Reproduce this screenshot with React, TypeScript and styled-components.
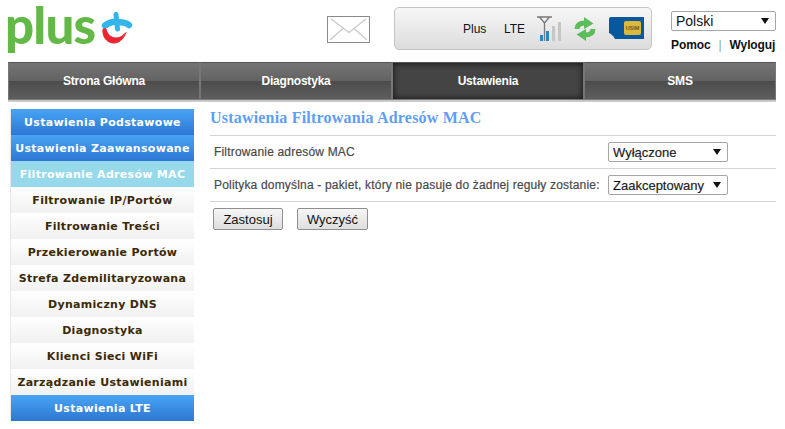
import React from "react";
import styled, { createGlobalStyle } from "styled-components";

const GlobalStyle = createGlobalStyle`
  html, body {
    margin: 0;
    padding: 0;
    background: #fff;
    font-family: "Liberation Sans", Arial, sans-serif;
  }
`;

const Page = styled.div`
  width: 785px;
  height: 429px;
  overflow: hidden;
  padding: 0 9px 0 8px;
  box-sizing: border-box;
`;

const Header = styled.div`
  height: 62px;
  display: flex;
  align-items: flex-start;
`;

const LogoSlot = styled.div`
  width: 319px;
  height: 62px;
  display: flex;
  align-items: flex-start;
`;

const LogoText = styled.span`
  font-family: Lato, "Liberation Sans", sans-serif;
  font-size: 51px;
  line-height: 50px;
  font-weight: 900;
  color: #62b946;
  letter-spacing: -0.8px;
  margin-left: -3px;
  width: 96px;
  flex: none;
`;

const LogoMark = styled.svg`
  margin-top: 11px;
`;

const MailSlot = styled.div`
  width: 67px;
  padding-top: 16px;
`;

const StatusBox = styled.div`
  width: 258px;
  height: 43px;
  margin-top: 7px;
  box-sizing: border-box;
  border: 1px solid #c4c4c4;
  border-radius: 5px;
  background: linear-gradient(#f7f7f7, #dcdcdc);
  display: flex;
  align-items: center;
  padding-left: 68px;
  font-size: 12px;
  color: #111;
`;

const StatusText = styled.span<{ $width: number }>`
  width: ${(p) => p.$width}px;
`;

const RightTools = styled.div`
  margin-left: 19px;
  padding-top: 11px;
  width: 105px;
`;

const SelectWrap = styled.div<{ $width: number; $height: number }>`
  position: relative;
  width: ${(p) => p.$width}px;
  height: ${(p) => p.$height}px;
  &::after {
    content: "";
    position: absolute;
    right: 7px;
    top: 50%;
    margin-top: -3px;
    border-left: 4px solid transparent;
    border-right: 4px solid transparent;
    border-top: 6px solid #111;
  }
`;

const Select = styled.select<{ $size: number }>`
  appearance: none;
  width: 100%;
  height: 100%;
  box-sizing: border-box;
  border: 1px solid #a6a6a6;
  border-radius: 2px;
  background: #fff;
  padding: 0 0 0 4px;
  font-family: "Liberation Sans", Arial, sans-serif;
  font-size: ${(p) => p.$size}px;
  color: #111;
  outline: none;
`;

const UserLinks = styled.div`
  display: flex;
  align-items: center;
  margin-top: 7px;
  font-size: 12px;
  font-weight: bold;
  letter-spacing: -0.1px;
  color: #111;
`;

const Separator = styled.span`
  font-weight: normal;
  color: #8aa;
  margin: 0 8px;
`;

const Nav = styled.div`
  height: 38px;
  display: flex;
  border-bottom: 2px solid #c9c9c9;
  box-sizing: content-box;
`;

const NavItem = styled.div<{ $active?: boolean }>`
  flex: 1;
  display: flex;
  align-items: center;
  justify-content: center;
  box-sizing: border-box;
  border: 1px solid #777;
  border-top-color: #555;
  font-size: 12px;
  font-weight: bold;
  letter-spacing: -0.2px;
  color: #fff;
  background: ${(p) =>
    p.$active
      ? "#444"
      : "linear-gradient(#757575 0, #626262 50%, #4c4c4c 50%, #5e5e5e 100%)"};
  box-shadow: ${(p) => (p.$active ? "inset 0 0 6px #111" : "none")};
`;

const Body = styled.div`
  display: flex;
  padding: 7px 0 0 2px;
`;

const Sidebar = styled.div`
  width: 184px;
  flex: none;
  border-left: 1px solid #e8e8e8;
  box-sizing: border-box;
`;

const MenuItem = styled.div<{ $kind: "blue" | "current" | "plain" }>`
  height: 26px;
  display: flex;
  align-items: center;
  justify-content: center;
  font-family: "DejaVu Sans", Verdana, sans-serif;
  font-size: 11px;
  font-weight: bold;
  letter-spacing: 0.3px;
  white-space: nowrap;
  color: ${(p) => (p.$kind === "plain" ? "#3a2a05" : "#fff")};
  background: ${(p) =>
    p.$kind === "blue"
      ? "linear-gradient(#48a4f5, #2d77d2)"
      : p.$kind === "current"
        ? "#95d9ea"
        : "linear-gradient(#fff, #f1f1f1)"};
`;

const Main = styled.div`
  flex: 1;
  margin-left: 16px;
  width: 559px;
`;

const Title = styled.h1`
  margin: 0;
  height: 26px;
  font-family: "Liberation Serif", "Times New Roman", serif;
  font-size: 16px;
  letter-spacing: 0.2px;
  font-weight: bold;
  line-height: 18px;
  color: #5f9df7;
  border-bottom: 1px solid #d4d4d4;
  box-sizing: content-box;
`;

const FormRow = styled.div`
  height: 32px;
  display: flex;
  align-items: center;
  padding-left: 4px;
  border-bottom: 1px solid #d4d4d4;
  font-size: 12px;
  letter-spacing: 0.18px;
  -webkit-text-stroke: 0.2px #4a4a4a;
  color: #4a4a4a;
`;

const RowLabel = styled.div`
  width: 394px;
  flex: none;
  white-space: nowrap;
`;

const Buttons = styled.div`
  display: flex;
  gap: 14px;
  padding: 6px 0 0 3px;
`;

const Button = styled.button<{ $width: number }>`
  height: 22px;
  padding: 0;
  width: ${(p) => p.$width}px;
  box-sizing: border-box;
  border: 1px solid #8f8f8f;
  border-radius: 2px;
  background: linear-gradient(#f6f6f6, #dedede);
  font-family: "Liberation Sans", Arial, sans-serif;
  font-size: 13px;
  color: #111;
`;

const PlusLogo = () => (
  <>
    <LogoText>plus</LogoText>
    <LogoMark width="32" height="34" viewBox="0 0 32 34" fill="none">
      <path d="M4 14.500Q11 10 16 11Q24 11 28 14" stroke="#33b5ea" strokeWidth="6.500" strokeLinecap="round" />
      <path d="M15 3.500L16.500 18" stroke="#33b5ea" strokeWidth="5" strokeLinecap="round" />
      <path
        d="M2 18C2.500 18 4.500 17 5 18C6 23 10 27 15 27C19 27 22 25 25 21.500C22.500 28 18 32.500 12 32C6 31.500 1 26 2 18z"
        fill="#ec2331"
        stroke="#ec2331"
      />
    </LogoMark>
  </>
);

const MailIcon = () => (
  <svg width="44" height="28" viewBox="0 0 44 28" fill="none">
    <rect x="0.500" y="0.500" width="42" height="26" fill="#fff" stroke="#8a8a8a" />
    <path d="M4 3l18 13.500L39 3M3 24l13-11.500M40 24L27 12.500" stroke="#c8c8c8" strokeWidth="1.200" />
  </svg>
);

const SignalIcon = () => (
  <svg width="28" height="26" viewBox="0 0 28 26" fill="none">
    <path d="M1 1h15M3.500 1l5 6 5-6M8.500 7v18" stroke="#777" strokeWidth="1.300" />
    <rect x="4" y="19" width="3" height="6" fill="#2a87c5" />
    <rect x="10" y="15" width="3" height="10" fill="#2a87c5" />
    <rect x="16" y="10" width="3" height="15" fill="#c6c6c6" />
    <rect x="22" y="6" width="3" height="19" fill="#c6c6c6" />
  </svg>
);

const RefreshIcon = () => (
  <svg width="22" height="24" viewBox="0 0 22 24" fill="none">
    <path d="M3 12C3 8 6 6 11 6" stroke="#5cbd5a" strokeWidth="5" />
    <path d="M19 12C19 16 16 18 11 18" stroke="#5cbd5a" strokeWidth="5" />
    <path d="M10 0L19.500 6.500L10 12z" fill="#5cbd5a" />
    <path d="M12 24L2.500 17.500L12 12z" fill="#5cbd5a" />
  </svg>
);

const SimIcon = () => (
  <svg width="37" height="23" viewBox="0 0 37 23">
    <path d="M3 0h33v22H7C5 18 3 17 1 16V2q0-2 2-2z" fill="#07589c" />
    <rect x="16" y="4" width="17" height="14" rx="2" fill="#dcb83f" />
    <text x="24.500" y="13" fontSize="5.500" fontFamily="Liberation Sans" fontWeight="bold" fill="#6b5a20" textAnchor="middle">
      USIM
    </text>
  </svg>
);

const navItems = ["Strona Główna", "Diagnostyka", "Ustawienia", "SMS"];

const menuItems: { label: string; kind: "blue" | "current" | "plain" }[] = [
  { label: "Ustawienia Podstawowe", kind: "blue" },
  { label: "Ustawienia Zaawansowane", kind: "blue" },
  { label: "Filtrowanie Adresów MAC", kind: "current" },
  { label: "Filtrowanie IP/Portów", kind: "plain" },
  { label: "Filtrowanie Treści", kind: "plain" },
  { label: "Przekierowanie Portów", kind: "plain" },
  { label: "Strefa Zdemilitaryzowana", kind: "plain" },
  { label: "Dynamiczny DNS", kind: "plain" },
  { label: "Diagnostyka", kind: "plain" },
  { label: "Klienci Sieci WiFi", kind: "plain" },
  { label: "Zarządzanie Ustawieniami", kind: "plain" },
  { label: "Ustawienia LTE", kind: "blue" },
];

export default function App() {
  return (
    <Page>
      <GlobalStyle />
      <Header>
        <LogoSlot>
          <PlusLogo />
        </LogoSlot>
        <MailSlot>
          <MailIcon />
        </MailSlot>
        <StatusBox>
          <StatusText $width={41}>Plus</StatusText>
          <StatusText $width={32}>LTE</StatusText>
          <SignalIcon />
          <StatusText $width={10} />
          <RefreshIcon />
          <StatusText $width={12} />
          <SimIcon />
        </StatusBox>
        <RightTools>
          <SelectWrap $width={105} $height={20}>
            <Select $size={14} defaultValue="pl">
              <option value="pl">Polski</option>
            </Select>
          </SelectWrap>
          <UserLinks>
            <span>Pomoc</span>
            <Separator>|</Separator>
            <span>Wyloguj</span>
          </UserLinks>
        </RightTools>
      </Header>
      <Nav>
        {navItems.map((item) => (
          <NavItem key={item} $active={item === "Ustawienia"}>
            {item}
          </NavItem>
        ))}
      </Nav>
      <Body>
        <Sidebar>
          {menuItems.map((item) => (
            <MenuItem key={item.label} $kind={item.kind}>
              {item.label}
            </MenuItem>
          ))}
        </Sidebar>
        <Main>
          <Title>Ustawienia Filtrowania Adresów MAC</Title>
          <FormRow>
            <RowLabel>Filtrowanie adresów MAC</RowLabel>
            <SelectWrap $width={120} $height={20}>
              <Select $size={13} defaultValue="off">
                <option value="off">Wyłączone</option>
              </Select>
            </SelectWrap>
          </FormRow>
          <FormRow>
            <RowLabel>Polityka domyślna - pakiet, który nie pasuje do żadnej reguły zostanie:</RowLabel>
            <SelectWrap $width={120} $height={20}>
              <Select $size={13} defaultValue="ok">
                <option value="ok">Zaakceptowany</option>
              </Select>
            </SelectWrap>
          </FormRow>
          <Buttons>
            <Button $width={70}>Zastosuj</Button>
            <Button $width={71}>Wyczyść</Button>
          </Buttons>
        </Main>
      </Body>
    </Page>
  );
}
